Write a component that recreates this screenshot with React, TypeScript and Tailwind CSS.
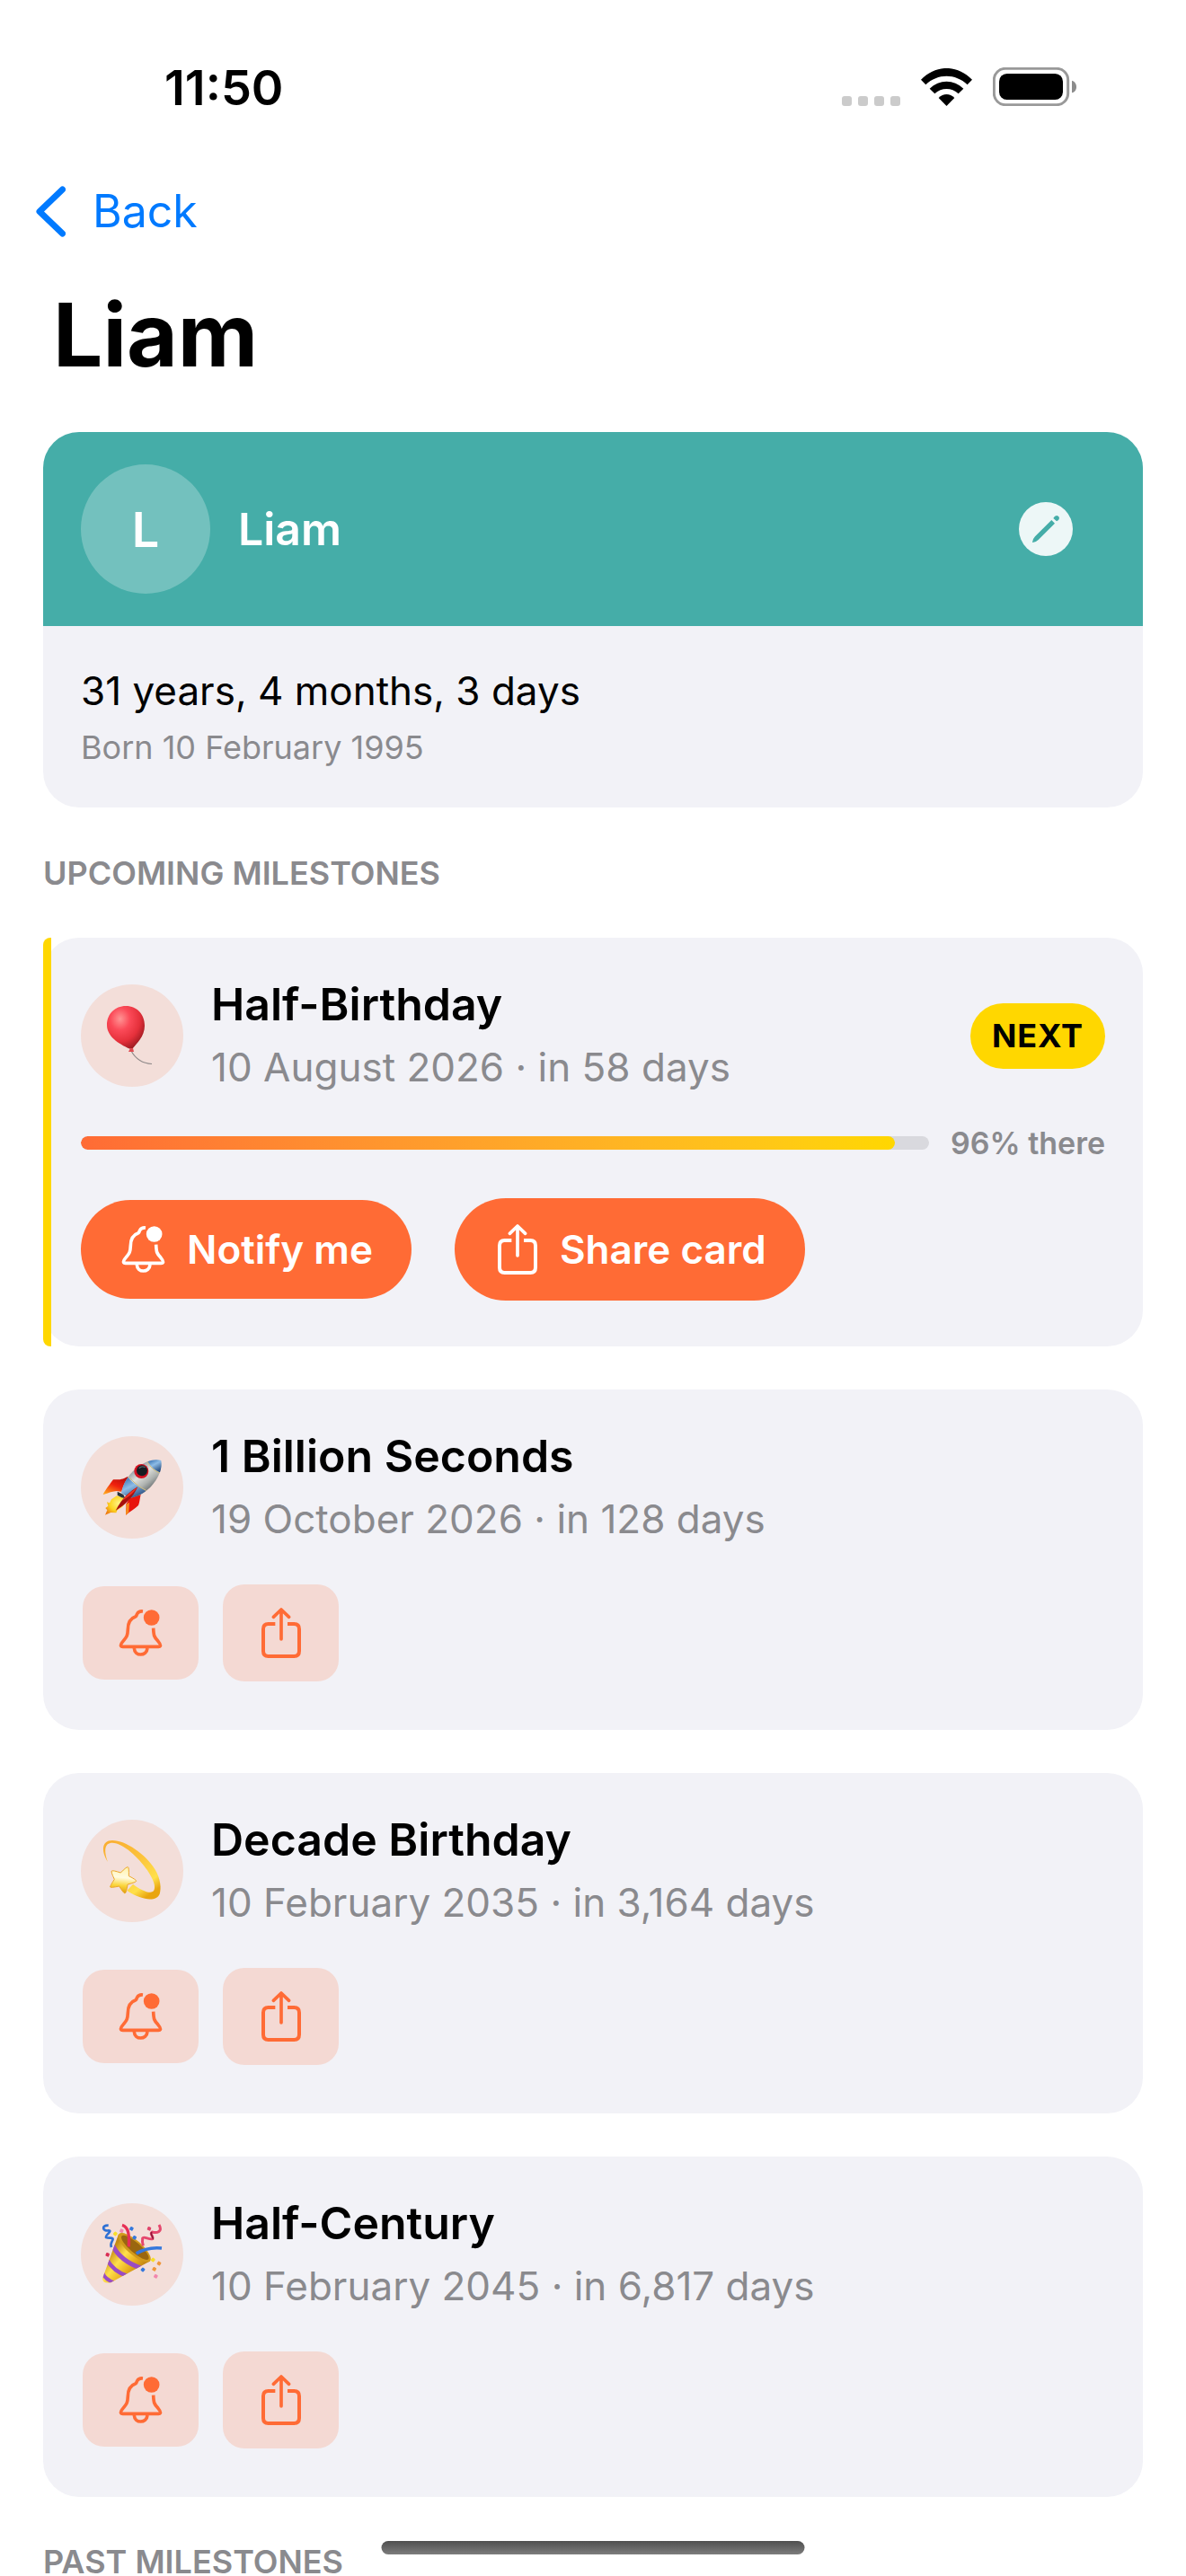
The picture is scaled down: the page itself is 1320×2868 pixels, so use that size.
import type { ReactNode } from "react";

type Milestone = {
  title: string;
  date: string;
  left: string;
  icon: ReactNode;
  progress?: number;
};

/* ---------- Status bar icons ---------- */

function SignalDots() {
  return (
    <svg width="65" height="11" viewBox="0 0 65 11" fill="#cbcbcb" aria-hidden="true">
      <rect x="0" width="11" height="11" rx="3" />
      <rect x="18" width="11" height="11" rx="3" />
      <rect x="36" width="11" height="11" rx="3" />
      <rect x="54" width="11" height="11" rx="3" />
    </svg>
  );
}

function WifiIcon() {
  return (
    <svg width="57" height="42" viewBox="495 75 171 126" aria-hidden="true">
      <path d="M495 113 C545 62 616 62 666 113 L650 130 C610 92 551 92 511 130Z" />
      <path d="M524 143 C556 111 605 111 637 143 L620 160 C598 139 563 139 541 160Z" />
      <path d="M554 174 C569 158 592 158 607 174 L580.500 201Z" />
    </svg>
  );
}

function BatteryIcon() {
  return (
    <svg width="93" height="43" viewBox="735 75 279 129" aria-hidden="true">
      <rect x="739" y="79" width="247" height="121" rx="38" fill="none" stroke="#999" strokeWidth="9" />
      <rect x="756" y="96" width="213" height="87" rx="26" />
      <path d="M999 119 C1019 124 1019 156 999 160Z" fill="#8c8c8c" />
    </svg>
  );
}

/* ---------- UI icons ---------- */

function BellIcon() {
  return (
    <svg width="49" height="54" viewBox="156 159 147 162" fill="none" stroke="currentColor" aria-hidden="true">
      <path
        d="M237 168 C228 167 221 171 218 176 C216 179 217 182 213 185 C196 191 187 205 187 228 C186 252 182 254 170 269 C164 276 162 280 164 284 Q165 286 170 286 L289 286 Q294 286 295 284 C297 280 294 275 288 268 C275 254 273 250 272 224"
        strokeWidth="11"
      />
      <path d="M208 291 C209 319 250 319 252 291" strokeWidth="11" />
      <circle cx="266" cy="189" r="26.500" fill="currentColor" stroke="none" />
    </svg>
  );
}

function ShareIcon() {
  return (
    <svg width="46" height="58" viewBox="627 153 138 174" fill="none" stroke="currentColor" strokeWidth="12" aria-hidden="true">
      <path d="M676 210 H653 Q636 210 636 227 V301 Q636 318 653 318 H739 Q756 318 756 301 V227 Q756 210 739 210 H717" />
      <path d="M696 261 V164 M670 187 L696 162 L722 187" strokeLinecap="round" strokeLinejoin="round" strokeWidth="11" />
    </svg>
  );
}

function PencilIcon() {
  return (
    <svg width="60" height="60" viewBox="222 297 180 180" aria-hidden="true">
      <circle cx="312" cy="387" r="90" fill="#fff" opacity="0.9" />
      <g fill="#45ada8">
        <path d="M331 357 L342 368 L287 423 Q280 430 268 432 L267 431 Q268 420 276 412Z" />
        <path d="M337 351 Q341 342 349 342 Q357 344 357 351 Q356 358 348 361Z" />
      </g>
    </svg>
  );
}

/* ---------- Milestone drawings ---------- */

function Balloon() {
  return (
    <svg className="size-full" viewBox="0 0 114 114" role="img" aria-label="Balloon">
      <defs>
        <radialGradient id="balloon" cx="0.35" cy="0.3" r="0.75">
          <stop offset="0" stopColor="#ff9494" />
          <stop offset="0.35" stopColor="#fb4a58" />
          <stop offset="0.7" stopColor="#e5303b" />
          <stop offset="1" stopColor="#9b1a20" />
        </radialGradient>
      </defs>
      <path d="M56 74 C61 83 68 88 79 88.500" fill="none" stroke="#918b8b" strokeWidth="1.200" />
      <path d="M50 24 C63 24 71 34 71 46 C71 58 62 66 57 72 L54 71.500 C42 66 29 58 29 45 C29 33 38 24 50 24Z" fill="url(#balloon)" />
      <path d="M55 71 L58 71 L59 75 L53 75Z" fill="#e04a50" />
    </svg>
  );
}

function Rocket() {
  return (
    <svg className="size-full" viewBox="30 57 342 342" role="img" aria-label="Rocket">
      <defs>
        <linearGradient id="rocket-body" x1="0.25" y1="0.2" x2="0.75" y2="0.8">
          <stop offset="0" stopColor="#7d8790" />
          <stop offset="0.4" stopColor="#dfe1dd" />
          <stop offset="0.7" stopColor="#aeb2af" />
          <stop offset="1" stopColor="#5e6468" />
        </linearGradient>
        <linearGradient id="rocket-tip" x1="0.2" y1="0" x2="0.8" y2="1">
          <stop offset="0" stopColor="#3c75b5" />
          <stop offset="0.4" stopColor="#8dbce6" />
          <stop offset="1" stopColor="#1c3f73" />
        </linearGradient>
        <linearGradient id="rocket-fin" x1="0.8" y1="0" x2="0.2" y2="1">
          <stop offset="0" stopColor="#b30c0c" />
          <stop offset="0.5" stopColor="#f0210e" />
          <stop offset="1" stopColor="#ffa21c" />
        </linearGradient>
        <radialGradient id="rocket-fire" cx="0.6" cy="0.4" r="0.7">
          <stop offset="0" stopColor="#fff58a" />
          <stop offset="0.6" stopColor="#fcd31f" />
          <stop offset="1" stopColor="#ee7d14" />
        </radialGradient>
      </defs>
      <path d="M150 256 L132 268 L126 280 L117 277 L121 290 L112 297 L118 304 L111 320 L130 312 L148 313 L152 304 L168 294 L190 266Z" fill="url(#rocket-fire)" />
      <path d="M188 191 C165 204 152 202 138 202 C128 216 112 236 104 252 C122 247 138 240 150 240 L168 243 L178 222Z" fill="url(#rocket-fin)" />
      <path d="M230 252 C226 270 226 280 222 288 C210 300 196 308 180 320 C179 306 183 296 181 284 L194 262Z" fill="#e8140d" />
      <path d="M180 320 C179 306 183 296 181 284 L192 278 L190 312Z" fill="#f58a1d" />
      <path d="M297 138 C270 132 240 142 213 166 C186 190 172 215 165 246 L192 264 C225 258 258 240 280 205 C294 182 302 160 297 138Z" fill="url(#rocket-body)" />
      <path d="M187 195 C174 213 168 230 165 246 L192 264 C212 260 232 252 247 240 Q212 222 187 195Z" fill="url(#rocket-tip)" />
      <path d="M298 138 C283 134 267 136 253 142 Q268 168 294 178 C299 162 300 150 298 138Z" fill="url(#rocket-tip)" />
      <path d="M252 142 Q267 170 293 180 M190 192 Q214 222 248 238" fill="none" stroke="#cdbb78" strokeWidth="3" />
      <circle cx="232" cy="174" r="24" fill="#d41222" />
      <circle cx="234" cy="172" r="18" fill="#161d22" />
      <path d="M224 164 Q233 155 245 161" fill="none" stroke="#52646a" strokeWidth="4" />
      <path d="M152 242 L172 252 L178 264 L166 262 L152 254Z" fill="#28343c" />
      <path d="M220 226 C194 242 168 262 146 306 C178 286 204 262 220 226Z" fill="#a80f0d" />
      <path d="M220 226 C196 244 180 256 168 272 L184 262 Q206 248 220 226Z" fill="#f03222" />
    </svg>
  );
}

function Dizzy() {
  return (
    <svg className="size-full" viewBox="30 48 342 342" role="img" aria-label="Shooting star">
      <defs>
        <linearGradient id="dizzy-tail" x1="0" y1="0" x2="0.7" y2="1">
          <stop offset="0" stopColor="#f9ac30" />
          <stop offset="0.5" stopColor="#fcc33b" />
          <stop offset="0.85" stopColor="#ffe04a" />
          <stop offset="1" stopColor="#e9a50f" />
        </linearGradient>
        <linearGradient id="dizzy-star" x1="0.5" y1="0" x2="0.4" y2="1">
          <stop offset="0" stopColor="#fff3ad" />
          <stop offset="0.4" stopColor="#fffbe0" />
          <stop offset="0.7" stopColor="#fbd63c" />
          <stop offset="1" stopColor="#dd9a0b" />
        </linearGradient>
      </defs>
      <path
        d="M120 189 C98 155 98 117 135 117 C180 117 245 162 277 213 C297 246 299 278 293 296 C283 322 236 319 184 285 L204 263 C232 285 262 297 273 286 C282 272 272 247 252 217 C224 175 172 126 135 125 C108 125 107 152 120 189Z"
        fill="url(#dizzy-tail)"
      />
      <path
        d="M187 206 Q191 206 190 236 Q216 249 215 253 Q214 257 186 264 Q182 293 177 294 Q173 294 158 270 Q130 276 128 273 Q127 270 142 247 Q130 222 133 219 Q136 216 163 225 Q182 205 187 206Z"
        fill="url(#dizzy-star)"
        stroke="#eba729"
        strokeWidth="3"
      />
    </svg>
  );
}

function PartyPopper() {
  return (
    <svg className="size-full" viewBox="30 39 342 342" role="img" aria-label="Party popper">
      <defs>
        <linearGradient id="popper-cone" x1="0.2" y1="0.3" x2="0.8" y2="0.8">
          <stop offset="0" stopColor="#c58a12" />
          <stop offset="0.35" stopColor="#ffe04c" />
          <stop offset="0.65" stopColor="#eab11f" />
          <stop offset="1" stopColor="#b97b10" />
        </linearGradient>
        <clipPath id="popper-clip">
          <path d="M156 142 C160 180 215 232 262 232 L130 304 Q100 308 103 288Z" />
        </clipPath>
      </defs>
      <path d="M156 142 C160 180 215 232 262 232 L130 304 Q100 308 103 288Z" fill="url(#popper-cone)" />
      <g clipPath="url(#popper-clip)" fill="none" stroke="#9a4bc4">
        <path d="M134 176 Q160 232 232 256" strokeWidth="15" />
        <path d="M116 226 Q140 268 186 282" strokeWidth="13" />
        <path d="M102 272 Q112 294 140 304" strokeWidth="12" />
      </g>
      <ellipse cx="209" cy="187" rx="69" ry="24" transform="rotate(41 209 187)" fill="#d29a1b" />
      <ellipse cx="211" cy="187" rx="59" ry="17" transform="rotate(41 211 187)" fill="#9a6610" />
      <path d="M168 112 C190 118 192 146 190 184" fill="none" stroke="#e62f55" strokeWidth="10" />
      <path d="M215 207 C242 190 270 186 300 189" fill="none" stroke="#3578dc" strokeWidth="11" />
      <path d="M122 113 C96 112 104 134 122 130 C138 130 110 146 114 153 C126 158 144 150 134 166 Q128 176 132 186" fill="none" stroke="#2f71d4" strokeWidth="8" />
      <path d="M291 111 C304 134 284 140 268 135 C258 140 274 152 270 158 C258 162 240 148 236 156 Q234 168 238 181" fill="none" stroke="#e5476d" strokeWidth="9" />
      <path d="M268 136 C258 140 274 152 270 158" fill="none" stroke="#8c1638" strokeWidth="5" />
      <g>
        <rect x="193" y="118" width="12" height="12" rx="3" fill="#3578dc" transform="rotate(30 199 124)" />
        <rect x="203" y="148" width="12" height="12" rx="3" fill="#3578dc" transform="rotate(30 209 154)" />
        <rect x="231" y="255" width="12" height="12" rx="3" fill="#3578dc" transform="rotate(40 237 261)" />
        <rect x="160" y="125" width="12" height="12" rx="3" fill="#f287ae" transform="rotate(25 166 131)" />
        <rect x="274" y="277" width="12" height="12" rx="3" fill="#f287ae" transform="rotate(30 280 283)" />
        <rect x="139" y="135" width="12" height="12" rx="3" fill="#f8de28" transform="rotate(40 145 141)" />
        <rect x="265" y="222" width="12" height="12" rx="3" fill="#f8de28" transform="rotate(40 271 228)" />
        <rect x="252" y="118" width="12" height="12" rx="3" fill="#e0446b" transform="rotate(20 258 124)" />
        <rect x="113" y="205" width="12" height="12" rx="3" fill="#d92f55" transform="rotate(20 119 211)" />
        <rect x="285" y="234" width="12" height="12" rx="3" fill="#f0963a" transform="rotate(30 291 240)" />
        <rect x="269" y="253" width="12" height="12" rx="3" fill="#f0963a" transform="rotate(30 275 259)" />
      </g>
    </svg>
  );
}

const milestones: Milestone[] = [
  { title: "Half-Birthday", date: "10 August 2026", left: "in 58 days", icon: <Balloon />, progress: 96 },
  { title: "1 Billion Seconds", date: "19 October 2026", left: "in 128 days", icon: <Rocket /> },
  { title: "Decade Birthday", date: "10 February 2035", left: "in 3,164 days", icon: <Dizzy /> },
  { title: "Half-Century", date: "10 February 2045", left: "in 6,817 days", icon: <PartyPopper /> },
];

function StatusBar() {
  return (
    <div className="flex justify-between pl-[183px] pr-[122px] pt-[66px]">
      <span className="text-[54px] leading-[64px] font-semibold">11:50</span>
      <div className="flex items-end gap-[23px] pb-3">
        <SignalDots />
        <WifiIcon />
        <BatteryIcon />
      </div>
    </div>
  );
}

function ProfileCard() {
  return (
    <section className="mt-12 overflow-hidden rounded-[40px] bg-[#f2f2f7]">
      <div className="flex items-center gap-[31px] bg-[#45ada8] py-9 pl-[42px] pr-[78px] text-white">
        <div className="flex size-36 items-center justify-center rounded-full bg-white/25 text-[54px] font-semibold">L</div>
        <h2 className="flex-1 text-[50px] leading-[64px] font-semibold">Liam</h2>
        <button type="button" aria-label="Edit profile">
          <PencilIcon />
        </button>
      </div>
      <div className="flex flex-col gap-[9px] px-[42px] pt-[42px] pb-[43px]">
        <p className="text-[44px] leading-[60px]">31 years, 4 months, 3 days</p>
        <p className="text-[36px] leading-[48px] text-[#8a8a8e]">Born 10 February 1995</p>
      </div>
    </section>
  );
}

function MilestoneCard({ title, date, left, icon, progress }: Milestone) {
  const isNext = progress !== undefined;

  return (
    <li className="relative rounded-[40px] bg-[#f2f2f7] p-[42px]">
      {/* Yellow edge of the next milestone */}
      {isNext && <span className="absolute inset-y-0 left-0 w-[9px] rounded-l-lg bg-[#ffd700]" />}

      <div className="flex items-center gap-[31px]">
        <div className="size-[114px] shrink-0 overflow-hidden rounded-full bg-[#f3ded9]">{icon}</div>
        <div className="flex flex-1 flex-col gap-1.5">
          <h3 className="text-[50px] leading-[64px] font-semibold">{title}</h3>
          <p className="text-[44px] leading-[64px] text-[#8a8a8e]">
            {date} · {left}
          </p>
        </div>
        {isNext && (
          <span className="rounded-full bg-[#ffd700] px-6 text-[36px] leading-[73px] font-bold tracking-wide">NEXT</span>
        )}
      </div>

      {isNext ? (
        <>
          <div className="mt-9 flex items-center gap-6">
            <div
              className="h-[15px] flex-1 overflow-hidden rounded-full bg-[#d9d9de]"
              role="progressbar"
              aria-label={title}
              aria-valuenow={progress}
              aria-valuemin={0}
              aria-valuemax={100}
            >
              <div
                className="h-full rounded-full bg-linear-to-r from-[#ff6b35] to-[#ffd700]"
                style={{ width: `${progress}%` }}
              />
            </div>
            <span className="text-[34px] leading-[33px] font-semibold text-[#8a8a8e]">{progress}% there</span>
          </div>
          <div className="mt-9 flex h-[132px] items-center gap-12 text-[44px] font-semibold text-white">
            <button type="button" className="flex h-[110px] items-center gap-6 rounded-full bg-[#ff6b35] pr-[43px] pl-[45px]">
              <BellIcon />
              Notify me
            </button>
            <button type="button" className="flex h-[114px] items-center gap-6 rounded-full bg-[#ff6b35] pr-[43px] pl-[47px]">
              <ShareIcon />
              Share card
            </button>
          </div>
        </>
      ) : (
        <div className="mt-9 mb-[7px] ml-0.5 flex h-[118px] items-center gap-[27px] text-[#ff6b35]">
          <button
            type="button"
            aria-label="Notify me"
            className="flex h-[104px] w-[129px] items-center justify-center rounded-3xl bg-[#f4d9d3]"
          >
            <BellIcon />
          </button>
          <button
            type="button"
            aria-label="Share card"
            className="flex h-[108px] w-[129px] items-center justify-center rounded-3xl bg-[#f4d9d3]"
          >
            <ShareIcon />
          </button>
        </div>
      )}
    </li>
  );
}

export default function App() {
  return (
    <div className="min-h-screen overflow-hidden bg-white font-['Inter',sans-serif] text-black">
      <StatusBar />

      <nav className="mt-[72px] px-10">
        <a href="#" className="flex w-fit items-center gap-[30px] text-[50px] leading-[66px] text-[#007aff]">
          <svg width="33" height="57" viewBox="0 0 33 57" fill="none" stroke="currentColor" strokeWidth="7" strokeLinecap="round" strokeLinejoin="round" aria-hidden="true">
            <path d="M29.500 4 L4 28.500 L29.500 53" />
          </svg>
          Back
        </a>
      </nav>

      <main className="px-12">
        <h1 className="mt-[45px] pl-[11px] text-[98px] leading-[120px] font-bold">Liam</h1>

        <ProfileCard />

        <h2 className="mt-[57px] mb-14 text-[36px] leading-8 font-semibold text-[#8a8a8e]">UPCOMING MILESTONES</h2>
        <ul className="flex flex-col gap-12">
          {milestones.map((m) => (
            <MilestoneCard key={m.title} {...m} />
          ))}
        </ul>

        <h2 className="mt-14 text-[36px] leading-8 font-semibold text-[#8a8a8e]">PAST MILESTONES</h2>
      </main>

      {/* Home indicator */}
      <div className="fixed bottom-6 left-1/2 h-[15px] w-[471px] -translate-x-1/2 rounded-full bg-linear-to-b from-[#4f4f4f] to-[#7d7d7d]" />
    </div>
  );
}
